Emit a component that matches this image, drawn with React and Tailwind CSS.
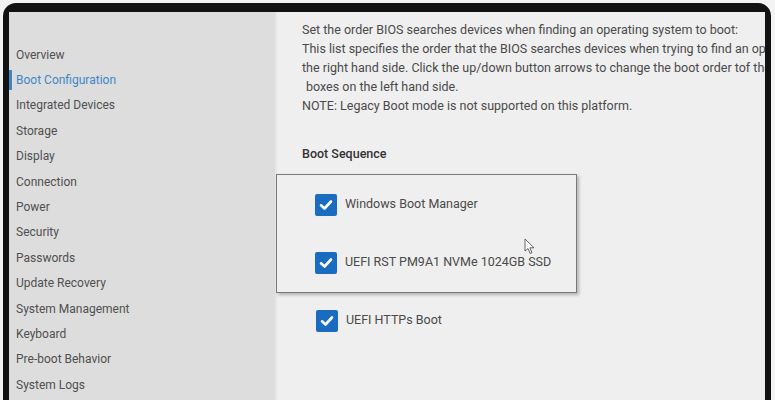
import React from "react";

const menu = [
  "Overview",
  "Boot Configuration",
  "Integrated Devices",
  "Storage",
  "Display",
  "Connection",
  "Power",
  "Security",
  "Passwords",
  "Update Recovery",
  "System Management",
  "Keyboard",
  "Pre-boot Behavior",
  "System Logs",
];

const CheckBox = () => (
  <div className="w-[22px] h-[22px] rounded-[2px] bg-[#1a6cc0] flex items-center justify-center shrink-0">
    <svg width="16" height="16" viewBox="0 0 16 16">
      <path d="M3 8.3 L6.5 11.5 L13 4.5" fill="none" stroke="#fff" strokeWidth="2.6" strokeLinecap="round" strokeLinejoin="round" />
    </svg>
  </div>
);

const BootItem = ({ label }) => (
  <div className="flex items-center gap-[8px]">
    <CheckBox />
    <span className="text-[12.5px] text-[#4a4a4a]">{label}</span>
  </div>
);

const App = () => {
  return (
    <div className="w-[775px] h-[400px] overflow-hidden bg-[#f3f3f3] pt-[3px] pl-[3px] pr-[4px]" style={{ fontFamily: "Roboto, 'Liberation Sans', sans-serif" }}>
      <div className="h-[420px] bg-[#121212] rounded-t-[13px] pt-[9px] pl-[6px] pr-[6px]">
        <div className="h-full flex bg-[#efefef] overflow-hidden relative">
          {/* sidebar */}
          <div className="w-[268px] shrink-0 bg-[#dddddd] pt-[30px] border-r-2 border-[#e6e6e6]">
            {menu.map((item) => {
              const active = item === "Boot Configuration";
              return (
                <div key={item} className="relative h-[25.4px] flex items-center pl-[7px]">
                  {active && <div className="absolute left-0 top-[3px] w-[3px] h-[20px] bg-[#3f88c8]" />}
                  <span className={`text-[12px] ${active ? "text-[#3f88c8]" : "text-[#505050]"}`}>{item}</span>
                </div>
              );
            })}
          </div>

          {/* main */}
          <div className="flex-1 min-w-0 pt-[8px]">
            <div className="pl-[25px] text-[12.5px] leading-[19px] text-[#4a4a4a] whitespace-nowrap">
              <div>Set the order BIOS searches devices when finding an operating system to boot:</div>
              <div>This list specifies the order that the BIOS searches devices when trying to find an operating system to boot.</div>
              <div>the right hand side. Click the up/down button arrows to change the boot order tof the devices in the list.</div>
              <div className="pl-[4px]">boxes on the left hand side.</div>
              <div>NOTE: Legacy Boot mode is not supported on this platform.</div>
            </div>

            <div className="pl-[25px] mt-[30px] text-[12.5px] font-medium text-[#333]">Boot Sequence</div>

            <div className="ml-[-1px] mt-[10px] w-[301px] h-[119px] border border-[#7a7a7a] shadow-[2px_2px_3px_rgba(0,0,0,0.25)] pl-[38px] pt-[19px] flex flex-col gap-[36px]">
              <BootItem label="Windows Boot Manager" />
              <BootItem label="UEFI RST PM9A1 NVMe 1024GB SSD" />
            </div>

            <div className="pl-[39px] mt-[17px]">
              <BootItem label="UEFI HTTPs Boot" />
            </div>
          </div>

          {/* mouse cursor */}
          <svg className="absolute left-[515px] top-[226px]" width="12" height="17" viewBox="0 0 12 17">
            <path d="M1 1 L1 13 L4 10.5 L6.2 15.5 L8 14.7 L5.9 9.8 L10 9.8 Z" fill="#fff" stroke="#555" strokeWidth="0.9" strokeLinejoin="round" />
          </svg>
        </div>
      </div>
    </div>
  );
};

export default App;
